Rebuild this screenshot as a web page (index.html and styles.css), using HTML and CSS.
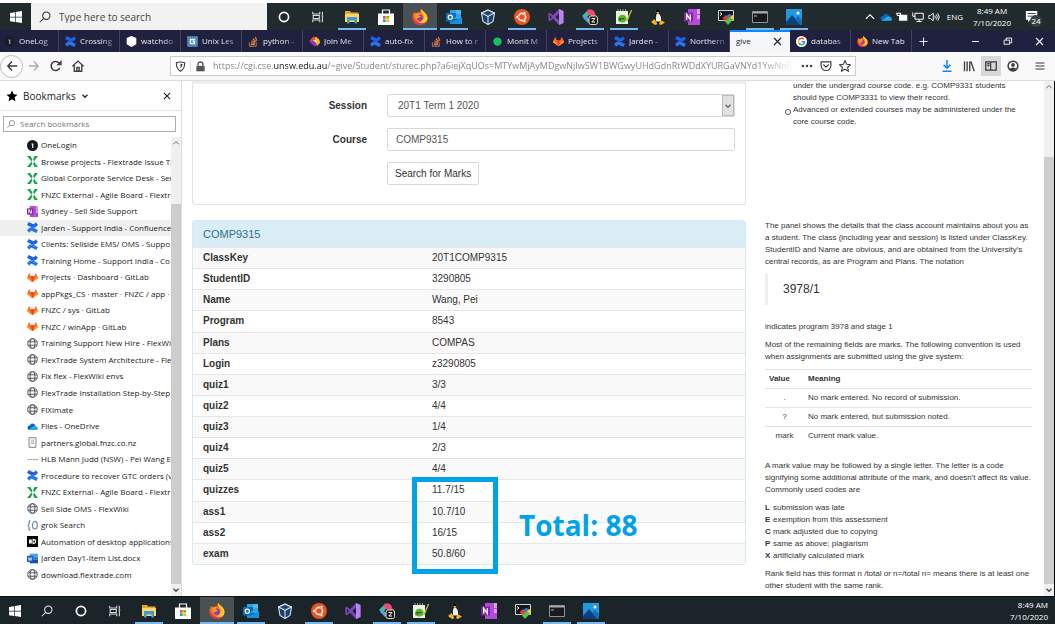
FILE: index.html
```html
<!DOCTYPE html>
<html lang="en">
<head>
<meta charset="utf-8">
<title>give</title>
<link rel="stylesheet" href="styles.css">
</head>
<body>
<svg class="sprite" aria-hidden="true">
  <symbol id="win" viewBox="0 0 16 16"><path fill="#fff" d="M2 4l5-.8v4.5H2zM7.700 3.100L14 2v5.700H7.700zM2 8.400h5v4.500L2 12.200zM7.700 8.400H14V14l-6.300-1z"/></symbol>
  <symbol id="search" viewBox="0 0 16 16"><g fill="none" stroke="currentColor" stroke-width="1.200"><circle cx="9.500" cy="6.500" r="4.200"/><path d="M6.500 9.500L2 14"/></g></symbol>
  <symbol id="cortana" viewBox="0 0 16 16"><circle cx="8" cy="8" r="4.600" fill="none" stroke="#fff" stroke-width="1.700"/></symbol>
  <symbol id="taskview" viewBox="0 0 16 16"><path fill="none" stroke="#d9dcdd" stroke-width="1.200" d="M2 2v2.500h8V2M2 14v-2.500h8V14M2.500 6.200h7v3.600h-7zM13 2v4M13 8v6M12 7h2"/></symbol>
  <symbol id="explorer" viewBox="0 0 16 16"><path fill="#e9a52b" d="M1 2h5l1 1.500h7.500V13H1z"/><path fill="#ffd767" d="M1 5h14v8H1z"/><path fill="#3f9bd8" d="M3 8h10v6.500h-2.500v-3h-5v3H3z"/></symbol>
  <symbol id="store" viewBox="0 0 16 16"><path fill="#fff" d="M0 4.500h16V16H0z"/><path fill="none" stroke="#fff" stroke-width="1.200" d="M4.500 5V1h7v4"/><path fill="#f25022" d="M5 7h2.700v2.700H5z"/><path fill="#7fba00" d="M8.300 7H11v2.700H8.300z"/><path fill="#00a4ef" d="M5 10.300h2.700V13H5z"/><path fill="#ffb900" d="M8.300 10.300H11V13H8.300z"/></symbol>
  <symbol id="firefox" viewBox="0 0 16 16"><path fill="#ff6a1f" d="M2 3l2 1.500Q6 3 8 3.300 8 1.500 9.500 0q.8 2 3 3.500Q16 6 15.500 10 14 15.800 8 15.900 1.500 15.500.5 9.500.4 6 2 3z"/><path fill="#ffc928" d="M9.500 0q-1 2 .5 4 2.500 3 1.500 6-1.500 3-4.500 3.500 5 2.500 8-2Q16.500 7 13 3.800 10.500 2 9.500 0z"/><path fill="#e62a63" d="M1 7Q0 15 8 15.900q4 0 6.500-3Q11 15 7.500 14 2.500 13 1 7z"/><circle cx="7.800" cy="8.800" r="3" fill="#7541c9"/><path fill="#ff9420" d="M3 5q2-1.500 5-.8L6.500 6.500 9 7Q8 9 6 9 4 11 3 9z"/></symbol>
  <symbol id="outlook" viewBox="0 0 16 16"><path fill="#28a8ea" d="M4 1h11v9H4z"/><path fill="#1066b5" d="M4 4h6v4H4z"/><path fill="#50b9f0" d="M10 1h5v4h-5z"/><path fill="#1490df" d="M4 8l6 3 6-3v7H4z"/><path fill="#0f6cbd" d="M0 4h8.500v8.500H0z"/><circle cx="4.300" cy="8.300" r="2.100" fill="none" stroke="#fff" stroke-width="1.200"/></symbol>
  <symbol id="vbox" viewBox="0 0 16 16"><path fill="#1d3f6e" stroke="#c6d8ec" stroke-width="1.200" d="M8 1l6.500 3L13 12.500 8 15.500 3 12.500 1.500 4z"/><path fill="#466c99" stroke="#e3edf7" d="M1.500 4L8 1l6.500 3L8 7.500z"/><path stroke="#e3edf7" d="M8 7.500v8"/><path fill="#21385b" d="M4.500 4L8 2.400 11.500 4 8 5.800z"/></symbol>
  <symbol id="ubuntu" viewBox="0 0 16 16"><circle cx="8" cy="8" r="8" fill="#e9531f"/><circle cx="8" cy="8" r="3.600" fill="none" stroke="#fff" stroke-width="1.600"/><g fill="#fff" stroke="#e9531f" stroke-width=".6"><circle cx="3.300" cy="8" r="1.500"/><circle cx="10.500" cy="3.900" r="1.500"/><circle cx="10.500" cy="12.100" r="1.500"/></g></symbol>
  <symbol id="vs" viewBox="0 0 16 16"><path fill="#7b45b5" d="M11 0l4.500 2v12L11 16 5 9.800 1.800 12.300.3 11.500v-7l1.500-.8L5 6.200zM11 4.800L7.300 8l3.700 3.200zM2 6v4l2-2z"/><path fill="#b685ee" d="M11 0l4.500 2v12L11 16z"/></symbol>
  <symbol id="slack" viewBox="0 0 16 16"><path fill="#48b9a5" d="M0 7l5-5 3 3-5 5z"/><path fill="#ef4a73" d="M5 1q4-2 7 1l2 5H9L6 5z"/><path fill="#5a9bd5" d="M1 9l3-2 5 5-3 2z"/><rect x="7" y="7" width="8.500" height="8.500" rx="2" fill="#171a1b" stroke="#e5d7b2"/><path fill="none" stroke="#fff" d="M9.500 9.500H13L9.800 13H13"/></symbol>
  <symbol id="npp" viewBox="0 0 16 16"><path fill="#e9f3e2" d="M0 2h12v13H0z"/><path stroke="#91a38c" d="M2 2V0M4.500 2V0M7 2V0M9.500 2V0"/><path fill="#5fb52b" d="M2 10q1-5 6-4 4 2 2 6-3 3-8 0z"/><path fill="#24551b" d="M3.500 9h5v1.300H5v1.200H3.500z"/><path stroke="#cdb73e" stroke-width="1.300" d="M15.500 1L11 12"/></symbol>
  <symbol id="tux" viewBox="0 0 16 16"><path fill="#0b0d0e" stroke="#555b5e" stroke-width=".4" d="M6 0h3l1 4q3 4 3 8l-4 3H6l-3-3Q4 7 5.500 4z"/><path fill="#f3f3ee" d="M6.800 4.500h2Q12 8 11 12.500H6Q5 8 6.800 4.500z"/><path fill="#f5b51d" d="M1 13l3.500-3 3 5-2.500 1zM9 15l1.500-4 4.500 2.500L11 16zM6 3h3.500L8 4.700z"/></symbol>
  <symbol id="onenote" viewBox="0 0 16 16"><path fill="#b44bd8" d="M4 0h12v16H4z"/><path fill="#d99bed" d="M13 0h3v5h-3zM13 6h3v4h-3z"/><path fill="#7f27a1" d="M0 3.500h9v9H0z"/><path fill="none" stroke="#fff" stroke-width="1.300" d="M2.700 10.800V5.300l3.600 5.400V5.200"/></symbol>
  <symbol id="mobax" viewBox="0 0 16 16"><path fill="#161a1e" stroke="#d5d5d5" d="M.5 1.500h15v10H.5z"/><path stroke="#fff" fill="none" d="M2 3.500l2 1.500-2 1.500"/><path fill="#e63c30" d="M4.500 9L8 6l3 3-3.500 3z"/><path fill="#2f7de1" d="M8.500 7l2.500-2 3 1-3 4z"/><path fill="#f7d02c" d="M12 8l4-3v5l-3 1z"/><path fill="#53c54a" d="M7 12.500l4-4 4 2-5 5.500z"/></symbol>
  <symbol id="cmd" viewBox="0 0 16 16"><path fill="#17191a" stroke="#8c9294" d="M.5 2.500h15v11H.5z"/><path fill="#a9afb1" d="M1 3h14v1.500H1z"/><path stroke="#d8dadb" stroke-width=".8" d="M2 7h3"/></symbol>
  <symbol id="photos" viewBox="0 0 16 16"><path fill="#2199df" d="M0 0h16v16H0z"/><path fill="#0c3f7e" d="M0 13l6-7 9 10H0z"/><path fill="#176bb5" d="M9 10l3-3 4 4v5h-2z"/><circle cx="12" cy="4" r="1.500" fill="#fff"/></symbol>
  <symbol id="confluence" viewBox="0 0 16 16"><path fill="#2378f0" d="M0 12Q4 6 9.500 8.500L16 11.500 13.500 16 7.500 13Q5.500 12 3.500 15.500z"/><path fill="#1f62dd" d="M16 4Q12 10 6.500 7.500L0 4.500 2.500 0l6 3Q10.500 4 12.500.5z"/></symbol>
  <symbol id="cross" viewBox="0 0 16 16"><g fill="#19a64a"><path d="M0 0h5l3 5.500L6.500 8zM16 0h-5L9 4l1 4zM0 16h5l3-5.500L6.500 8zM16 16h-5l-2-4 1-4z"/></g><path fill="#fff" d="M7.200 6.500h1.600v3H7.200z"/></symbol>
  <symbol id="gitlab" viewBox="0 0 16 16"><path fill="#fc6d26" d="M8 15L0 9l3-8 2.500 5h5L13 1l3 8z"/><path fill="#e24329" d="M8 15L5.500 6h5z"/><path fill="#fca326" d="M0 9l1-3 7 9zM16 9l-1-3-7 9z"/></symbol>
  <symbol id="globe" viewBox="0 0 16 16"><g fill="none" stroke="#505357" stroke-width="1.400"><circle cx="8" cy="8" r="7"/><ellipse cx="8" cy="8" rx="3.400" ry="7"/><path d="M1.500 5.500h13M1.500 10.500h13"/></g></symbol>
  <symbol id="onelogin" viewBox="0 0 16 16"><circle cx="8" cy="8" r="8" fill="#17191e"/><path fill="#fff" d="M6.500 5h2.700v6.500H7.500V6.700h-1z"/></symbol>
  <symbol id="onedrive" viewBox="0 0 16 16"><path fill="#0a65c0" d="M1 11Q0 7 4 6.500 6 2 10.500 4.500L14 9l-4 4H3q-1.500 0-2-2z"/><path fill="#28a8ea" d="M5 13l-3-.5L9 8q2-2 4 0 3 .5 3 3t-3 2z"/></symbol>
  <symbol id="doc" viewBox="0 0 16 16"><path fill="#fff" stroke="#777" stroke-width="1.300" d="M3 1h10v14H3z"/><path stroke="#888" d="M5.500 4.500h5M5.500 7h5M5.500 9.500h5"/></symbol>
  <symbol id="dash" viewBox="0 0 16 16"><path stroke="#9a9a9a" stroke-width="1.500" stroke-dasharray="3 1" d="M1 8h15"/></symbol>
  <symbol id="grok" viewBox="0 0 16 16"><g fill="none" stroke="#6f8cab" stroke-width="1.800"><path d="M5 1Q2.500 1 3 5q0 2.500-2 3 2 .5 2 3-.5 4 2 4"/><ellipse cx="11.500" cy="7.500" rx="3.500" ry="5.500"/></g></symbol>
  <symbol id="auto" viewBox="0 0 16 16"><path d="M0 0h16v16H0z"/><path fill="#fff" d="M3 5h4v6H3zM8 4q6 0 5.500 4T8 12z"/><path d="M9.500 6.500h2v3h-2z"/></symbol>
  <symbol id="word" viewBox="0 0 16 16"><path fill="#41a5ee" d="M4 1h12v5H4z"/><path fill="#2b7cd3" d="M4 6h12v4H4z"/><path fill="#174f9e" d="M4 10h12v5H4z"/><path fill="#185abd" d="M0 4h9v9H0z"/><path fill="none" stroke="#fff" d="M2 6l1.300 5 1.200-4 1.200 4L7 6"/></symbol>
  <symbol id="hex" viewBox="0 0 16 16"><path fill="#fff" d="M8 0l7 3v9l-7 4-7-4V3z"/></symbol>
  <symbol id="geeks" viewBox="0 0 16 16"><path fill="#3a86ca" stroke="#9dcef5" stroke-dasharray="2 1" d="M1 1h14v14H1z"/><path fill="none" stroke="#fff" stroke-width="2" d="M12 5H5v6h6V8H8"/></symbol>
  <symbol id="stack" viewBox="0 0 16 16"><path fill="none" stroke="#a9846a" stroke-width="1.300" d="M2 9v6h10V9"/><path stroke="#e8793a" stroke-width="1.700" d="M4 12.500h6M4.200 10l6 .8M5 7l5.500 2.200M7 4l4.500 4M10.500 1.500L13 7"/></symbol>
  <symbol id="swirl" viewBox="0 0 16 16"><path fill="#f2463e" d="M0 8L6 1l6 1-6 6z"/><path fill="#8d38c9" d="M0 8h7l6 6-5 1z"/><path fill="#f6b71d" d="M9 1q7 2 7 9l-4 4-3-6z"/><path fill="#fff" d="M6 7l4-2 1 5z"/></symbol>
  <symbol id="green" viewBox="0 0 16 16"><circle cx="8" cy="8" r="6" fill="#18c060"/></symbol>
  <symbol id="google" viewBox="0 0 16 16"><circle cx="8" cy="8" r="8" fill="#fff"/><g fill="none" stroke-width="2.200"><path stroke="#ea4335" d="M4.200 5.500Q7.500 1.500 11.500 4.500"/><path stroke="#fbbc05" d="M4.200 5.500q-1 2.500 0 5"/><path stroke="#34a853" d="M4.200 10.500q2.800 3.500 7 1.200"/><path stroke="#4285f4" d="M8 8.200h4.400q0 2.300-1.400 3.500"/></g></symbol>
  <symbol id="close" viewBox="0 0 16 16"><path stroke="currentColor" stroke-width="1.800" d="M3 3l10 10M13 3L3 13"/></symbol>
  <symbol id="plus" viewBox="0 0 16 16"><path stroke="currentColor" stroke-width="1.500" d="M8 2v12M2 8h12"/></symbol>
  <symbol id="down" viewBox="0 0 16 16"><path fill="none" stroke="currentColor" stroke-width="2.500" d="M3 5.500l5 5 5-5"/></symbol>
  <symbol id="up" viewBox="0 0 16 16"><path fill="none" stroke="currentColor" stroke-width="1.600" d="M2.500 10.500L8 5l5.500 5.500"/></symbol>
  <symbol id="star" viewBox="0 0 16 16"><path d="M8 .8l2.200 4.800 5.200.6-3.900 3.500 1.100 5.200L8 12.300l-4.600 2.600 1.100-5.200L.6 6.200l5.200-.6z"/></symbol>
</svg>

<header class="taskbar top">
  <button class="start" aria-label="Start"><svg class="i16"><use href="#win"/></svg></button>
  <label class="winsearch"><svg class="i14"><use href="#search"/></svg><input type="text" value="Type here to search" aria-label="Windows search"></label>
  <nav class="apps">
    <button aria-label="Cortana"><svg><use href="#cortana"/></svg></button>
    <button aria-label="Task view"><svg class="i14"><use href="#taskview"/></svg></button>
    <button class="open" aria-label="File Explorer"><svg><use href="#explorer"/></svg></button>
    <button aria-label="Store"><svg><use href="#store"/></svg></button>
    <button class="open current" aria-label="Firefox"><svg><use href="#firefox"/></svg></button>
    <button class="open" aria-label="Outlook"><svg><use href="#outlook"/></svg></button>
    <button aria-label="VirtualBox"><svg><use href="#vbox"/></svg></button>
    <button class="open" aria-label="Ubuntu"><svg><use href="#ubuntu"/></svg></button>
    <button aria-label="Visual Studio"><svg><use href="#vs"/></svg></button>
    <button class="open" aria-label="Slack"><svg><use href="#slack"/></svg></button>
    <button class="open" aria-label="Notepad++"><svg><use href="#npp"/></svg></button>
    <button aria-label="Linux"><svg><use href="#tux"/></svg></button>
    <button aria-label="OneNote"><svg><use href="#onenote"/></svg></button>
    <button aria-label="MobaXterm"><svg><use href="#mobax"/></svg></button>
    <button class="open" aria-label="Command Prompt"><svg><use href="#cmd"/></svg></button>
    <button class="open" aria-label="Photos"><svg><use href="#photos"/></svg></button>
  </nav>
  <div class="tray">
    <svg class="i12"><use href="#up"/></svg>
    <svg class="i12"><use href="#onedrive"/></svg>
    <svg class="i12" viewBox="0 0 16 16"><path fill="#fff" d="M4 5h11v8H4z"/><path stroke="#fff" fill="none" stroke-width="1.500" d="M1 3h5v3H2z"/></svg>
    <svg class="i12" viewBox="0 0 16 16"><path fill="none" stroke="#fff" stroke-width="1.300" d="M4 3h11v8H4zM9.500 11v3M6 14h7M1 2v5h3"/></svg>
    <svg class="i12" viewBox="0 0 16 16"><path fill="none" stroke="#fff" stroke-width="1.200" d="M1 6h2l4-3v10l-4-3H1zM9 6q1.500 2 0 4M11 4.500q3 3.500 0 7M13 3q4 5 0 10"/></svg>
    <span class="lang">ENG</span>
    <span class="clock">8:49 AM<br>7/10/2020</span>
    <span class="notice"><svg class="i14" viewBox="0 0 16 16"><path fill="#fff" d="M1 1h13v10H6l-2.500 3v-3H1z"/><path stroke="#222a2c" d="M3 4h9M3 7h9"/></svg><b>24</b></span>
  </div>
</header>

<nav class="tabs">
  <a class="tab" href="#"><svg class="dim"><use href="#onelogin"/></svg><span>OneLog</span></a>
  <a class="tab" href="#"><svg><use href="#confluence"/></svg><span>Crossing</span></a>
  <a class="tab" href="#"><svg><use href="#hex"/></svg><span>watchdo</span></a>
  <a class="tab" href="#"><svg><use href="#geeks"/></svg><span>Unix Les</span></a>
  <a class="tab" href="#"><svg><use href="#stack"/></svg><span>python -</span></a>
  <a class="tab" href="#"><svg><use href="#swirl"/></svg><span>Join Me</span></a>
  <a class="tab" href="#"><svg><use href="#confluence"/></svg><span>auto-fix</span></a>
  <a class="tab" href="#"><svg><use href="#stack"/></svg><span>How to r</span></a>
  <a class="tab" href="#"><svg><use href="#green"/></svg><span>Monit M</span></a>
  <a class="tab" href="#"><svg><use href="#gitlab"/></svg><span>Projects</span></a>
  <a class="tab" href="#"><svg><use href="#confluence"/></svg><span>Jarden -</span></a>
  <a class="tab" href="#"><svg><use href="#confluence"/></svg><span>Northern</span></a>
  <a class="tab active" href="#"><span>give</span><svg><use href="#close"/></svg></a>
  <a class="tab" href="#"><svg><use href="#google"/></svg><span>databas</span></a>
  <a class="tab last" href="#"><svg><use href="#firefox"/></svg><span>New Tab</span></a>
  <button class="new" aria-label="New tab"><svg><use href="#plus"/></svg></button>
  <div class="winctl">
    <button aria-label="Minimize"><svg viewBox="0 0 16 16"><path stroke="#fff" stroke-width="1.500" d="M3 8h10"/></svg></button>
    <button aria-label="Restore"><svg viewBox="0 0 16 16"><path fill="none" stroke="#fff" stroke-width="1.300" d="M3 6h8v6H3zM6 6V3h8v7h-3"/></svg></button>
    <button aria-label="Close"><svg><use href="#close"/></svg></button>
  </div>
</nav>

<div class="toolbar">
  <div class="navbtns">
    <button class="back" aria-label="Back"><svg viewBox="0 0 16 16"><path fill="none" stroke="currentColor" stroke-width="2" d="M8 2L2.500 8 8 14M2.500 8H15"/></svg></button>
    <button class="fwd" aria-label="Forward"><svg viewBox="0 0 16 16"><path fill="none" stroke="currentColor" stroke-width="1.700" d="M8 2l5.500 6L8 14M13.500 8H1"/></svg></button>
    <button aria-label="Reload"><svg viewBox="0 0 16 16"><path fill="none" stroke="currentColor" stroke-width="2" d="M13 10.500A6 6 0 1 1 12 4"/><path fill="currentColor" d="M15.500 0v7h-7z"/></svg></button>
    <button aria-label="Home"><svg viewBox="0 0 16 16"><path fill="none" stroke="currentColor" stroke-width="1.800" d="M.5 8.500L8 1.500l7.500 7M3 7v8h10V7M6.500 15v-5h3v5"/></svg></button>
  </div>
  <div class="urlbar">
    <svg viewBox="0 0 16 16"><path fill="none" stroke="#3d3d42" stroke-width="1.600" d="M2 2.500Q8 .5 14 2.500q.5 9-6 12.500-6.500-3.500-6-12.500z"/><path fill="#3d3d42" d="M8 4l3 .5q0 4-3 6.500z"/></svg>
    <i></i>
    <svg viewBox="0 0 16 16"><path fill="#55555a" d="M2 7h12v8H2z"/><path fill="none" stroke="#55555a" stroke-width="2" d="M4.500 7V4.500q0-3 3.500-3t3.500 3V7"/></svg>
    <span class="url">https://cgi.cse.<b>unsw.edu.au</b>/~give/Student/sturec.php?a6iejXqUOs=MTYwMjAyMDgwNjIwSW1BWGwyUHdGdnRtWDdXYURGaVNYd1YwNnR</span>
    <svg class="i12" viewBox="0 0 16 16"><g fill="#3d3d42"><circle cx="2.500" cy="8" r="1.700"/><circle cx="8" cy="8" r="1.700"/><circle cx="13.500" cy="8" r="1.700"/></g></svg>
    <svg class="i12" viewBox="0 0 16 16"><path fill="none" stroke="#3d3d42" stroke-width="1.600" d="M1.500 2.500h13V8q-1 6-6.500 6T1.500 8zM4.500 6L8 9.500 11.500 6"/></svg>
    <svg class="i12 outline"><use href="#star"/></svg>
  </div>
  <div class="tools">
    <button class="dl" aria-label="Downloads"><svg viewBox="0 0 16 16"><path fill="none" stroke="currentColor" stroke-width="2" d="M8 0v11M3.500 6.500L8 11l4.500-4.500M2 15h12"/></svg></button>
    <button aria-label="Library"><svg viewBox="0 0 16 16"><path stroke="currentColor" stroke-width="1.800" d="M2 2v13M5.500 2v13M9 2v13M10.500 2L15 15"/></svg></button>
    <button class="on" aria-label="Sidebars"><svg viewBox="0 0 16 16"><path fill="none" stroke="currentColor" stroke-width="1.700" d="M1 2.500h14v11H1zM7.500 2.500v11M3 5h3M3 7.500h3"/></svg></button>
    <button aria-label="Account"><svg viewBox="0 0 16 16"><circle cx="8" cy="8" r="6.500" fill="none" stroke="currentColor" stroke-width="2"/><circle cx="8" cy="6.500" r="2.500" fill="currentColor"/><path fill="currentColor" d="M3 12q5-4 10 0-5 5-10 0z"/></svg></button>
    <button class="menu" aria-label="Menu"><svg viewBox="0 0 16 16"><path stroke="currentColor" stroke-width="1.600" d="M2 4h12M2 8h12M2 12h12"/></svg></button>
  </div>
</div>

<div class="content">
  <aside class="sidebar">
    <div class="sidehead"><svg class="i12"><use href="#star"/></svg><h2>Bookmarks</h2><svg class="i8"><use href="#down"/></svg><button aria-label="Close sidebar"><svg class="i10"><use href="#close"/></svg></button></div>
    <label class="sidesearch"><svg class="i10"><use href="#search"/></svg><input type="text" placeholder="Search bookmarks" aria-label="Search bookmarks"></label>
    <div class="sidebody">
      <ul class="marks">
        <li><svg><use href="#onelogin"/></svg><a href="#">OneLogin</a></li>
        <li><svg><use href="#cross"/></svg><a href="#">Browse projects - Flextrade Issue Tr.</a></li>
        <li><svg><use href="#cross"/></svg><a href="#">Global Corporate Service Desk - Ser</a></li>
        <li><svg><use href="#cross"/></svg><a href="#">FNZC External - Agile Board - Flextr</a></li>
        <li><svg><use href="#onenote"/></svg><a href="#">Sydney - Sell Side Support</a></li>
        <li class="sel"><svg><use href="#confluence"/></svg><a href="#">Jarden - Support India - Confluence</a></li>
        <li><svg><use href="#confluence"/></svg><a href="#">Clients: Sellside EMS/ OMS - Suppo</a></li>
        <li><svg><use href="#confluence"/></svg><a href="#">Training Home - Support India - Co</a></li>
        <li><svg><use href="#gitlab"/></svg><a href="#">Projects · Dashboard · GitLab</a></li>
        <li><svg><use href="#gitlab"/></svg><a href="#">appPkgs_CS · master · FNZC / app · .</a></li>
        <li><svg><use href="#gitlab"/></svg><a href="#">FNZC / sys · GitLab</a></li>
        <li><svg><use href="#gitlab"/></svg><a href="#">FNZC / winApp · GitLab</a></li>
        <li><svg><use href="#globe"/></svg><a href="#">Training Support New Hire - FlexWi</a></li>
        <li><svg><use href="#globe"/></svg><a href="#">FlexTrade System Architecture - Flex</a></li>
        <li><svg><use href="#globe"/></svg><a href="#">Fix flex - FlexWiki envs</a></li>
        <li><svg><use href="#globe"/></svg><a href="#">FlexTrade Installation Step-by-Step</a></li>
        <li><svg><use href="#globe"/></svg><a href="#">FIXimate</a></li>
        <li><svg><use href="#onedrive"/></svg><a href="#">Files - OneDrive</a></li>
        <li><svg><use href="#doc"/></svg><a href="#">partners.global.fnzc.co.nz</a></li>
        <li><svg><use href="#dash"/></svg><a href="#">HLB Mann Judd (NSW) - Pei Wang E</a></li>
        <li><svg><use href="#confluence"/></svg><a href="#">Procedure to recover GTC orders (v1</a></li>
        <li><svg><use href="#cross"/></svg><a href="#">FNZC External - Agile Board - Flextr</a></li>
        <li><svg><use href="#globe"/></svg><a href="#">Sell Side OMS - FlexWiki</a></li>
        <li><svg><use href="#grok"/></svg><a href="#">grok Search</a></li>
        <li><svg><use href="#auto"/></svg><a href="#">Automation of desktop applications</a></li>
        <li><svg><use href="#word"/></svg><a href="#">Jarden Day1-Item List.docx</a></li>
        <li><svg><use href="#globe"/></svg><a href="#">download.flextrade.com</a></li>
      </ul>
      <div class="scroll side"><svg class="i8"><use href="#up"/></svg><div class="thumb"></div><svg class="i8"><use href="#down"/></svg></div>
    </div>
  </aside>

  <main class="page">
    <form class="panel search">
      <label for="session">Session</label>
      <div class="selectbox"><select id="session"><option>20T1 Term 1 2020</option></select><span><svg class="i8"><use href="#down"/></svg></span></div>
      <label for="course">Course</label>
      <input id="course" type="text" value="COMP9315">
      <button type="button">Search for Marks</button>
    </form>
    <section class="notes hint">
      <ul><li>under the undergrad course code. e.g. COMP9331 students<br>should type COMP3331 to view their record.</li><li class="bullet">Advanced or extended courses may be administered under the<br>core course code.</li></ul>
    </section>
    <section class="panel record">
      <h3>COMP9315</h3>
      <table>
        <tr><th scope="row">ClassKey</th><td>20T1COMP9315</td></tr>
        <tr><th scope="row">StudentID</th><td>3290805</td></tr>
        <tr><th scope="row">Name</th><td>Wang, Pei</td></tr>
        <tr><th scope="row">Program</th><td>8543</td></tr>
        <tr><th scope="row">Plans</th><td>COMPAS</td></tr>
        <tr><th scope="row">Login</th><td>z3290805</td></tr>
        <tr><th scope="row">quiz1</th><td>3/3</td></tr>
        <tr><th scope="row">quiz2</th><td>4/4</td></tr>
        <tr><th scope="row">quiz3</th><td>1/4</td></tr>
        <tr><th scope="row">quiz4</th><td>2/3</td></tr>
        <tr><th scope="row">quiz5</th><td>4/4</td></tr>
        <tr><th scope="row">quizzes</th><td>11.7/15</td></tr>
        <tr><th scope="row">ass1</th><td>10.7/10</td></tr>
        <tr><th scope="row">ass2</th><td>16/15</td></tr>
        <tr><th scope="row">exam</th><td>50.8/60</td></tr>
      </table>
      <div class="marker"></div>
      <strong class="total">Total: 88</strong>
    </section>
    <section class="notes">
      <p>The panel shows the details that the class account maintains about you as<br>a student. The class (including year and session) is listed under ClassKey.<br>StudentID and Name are obvious, and are obtained from the University's<br>central records, as are Program and Plans. The notation</p>
      <blockquote>3978/1</blockquote>
      <p>indicates program 3978 and stage 1</p>
      <p>Most of the remaining fields are marks. The following convention is used<br>when assignments are submitted using the give system:</p>
      <table>
        <tr><th>Value</th><th>Meaning</th></tr>
        <tr><td>.</td><td>No mark entered. No record of submission.</td></tr>
        <tr><td>?</td><td>No mark entered, but submission noted.</td></tr>
        <tr><td>mark</td><td>Current mark value.</td></tr>
      </table>
      <p>A mark value may be followed by a single letter. The letter is a code<br>signifying some additional attribute of the mark, and doesn't affect its value.<br>Commonly used codes are</p>
      <dl><dt>L</dt><dd>submission was late</dd><dt>E</dt><dd>exemption from this assessment</dd><dt>C</dt><dd>mark adjusted due to copying</dd><dt>P</dt><dd>same as above; plagiarism</dd><dt>X</dt><dd>artificially calculated mark</dd></dl>
      <p>Rank field has this format n /total or n=/total n= means there is at least one<br>other student with the same rank.</p>
    </section>
  </main>
  <div class="scroll main"><svg class="i8"><use href="#up"/></svg><div class="thumb"></div><svg class="i8"><use href="#down"/></svg></div>
</div>

<footer class="taskbar bottom">
  <button class="start" aria-label="Start"><svg class="i16"><use href="#win"/></svg></button>
  <nav class="apps">
    <button aria-label="Search"><svg class="i14"><use href="#search"/></svg></button>
    <button aria-label="Cortana"><svg><use href="#cortana"/></svg></button>
    <button aria-label="Task view"><svg class="i14"><use href="#taskview"/></svg></button>
    <button class="open" aria-label="File Explorer"><svg><use href="#explorer"/></svg></button>
    <button aria-label="Store"><svg><use href="#store"/></svg></button>
    <button class="open current" aria-label="Firefox"><svg><use href="#firefox"/></svg></button>
    <button class="open" aria-label="Outlook"><svg><use href="#outlook"/></svg></button>
    <button aria-label="VirtualBox"><svg><use href="#vbox"/></svg></button>
    <button class="open" aria-label="Ubuntu"><svg><use href="#ubuntu"/></svg></button>
    <button aria-label="Visual Studio"><svg><use href="#vs"/></svg></button>
    <button class="open" aria-label="Slack"><svg><use href="#slack"/></svg></button>
    <button class="open" aria-label="Notepad++"><svg><use href="#npp"/></svg></button>
    <button aria-label="Linux"><svg><use href="#tux"/></svg></button>
    <button aria-label="OneNote"><svg><use href="#onenote"/></svg></button>
    <button aria-label="MobaXterm"><svg><use href="#mobax"/></svg></button>
    <button class="open" aria-label="Command Prompt"><svg><use href="#cmd"/></svg></button>
    <button class="open" aria-label="Photos"><svg><use href="#photos"/></svg></button>
  </nav>
  <span class="clock">8:49 AM<br>7/10/2020</span>
</footer>
</body>
</html>
```
FILE: styles.css
```css
* { box-sizing: border-box; }
body {
  margin: 0;
  padding-top: 3px;
  height: 100vh;
  display: flex;
  flex-direction: column;
  overflow: hidden;
  background: #fff;
  color: #222;
  font: 8px/12px "Open Sans", sans-serif;
}
button, input, select { font: inherit; color: inherit; margin: 0; padding: 0; border: 0; background: none; min-width: 0; }
button { display: flex; align-items: center; justify-content: center; }
a { color: inherit; text-decoration: none; }
svg { width: 16px; height: 16px; flex: none; }
.sprite { position: absolute; width: 0; height: 0; }
.i14 { width: 14px; height: 14px; }
.i12 { width: 12px; height: 12px; }
.i10 { width: 10px; height: 10px; }
.i8 { width: 8px; height: 8px; }

/* Windows task bars */
.taskbar { display: flex; flex: none; background: #212a2d; color: #fff; }
.top { height: 27px; }
.bottom { height: 28px; background: #1b2529; border-top: 1px solid #0c1114; }
.start { width: 31px; }
.bottom .start { width: 30px; }
.winsearch { width: 236px; display: flex; align-items: center; gap: 7px; padding-left: 7px; background: #f2f2f2; color: #333; }
.winsearch input { flex: 1; font-size: 10px; color: #444; }
.apps { display: flex; }
.apps button { width: 34px; position: relative; color: #e3e5e6; }
.apps .current { background: #4a5153; }
.apps .open::after { content: ""; position: absolute; left: 3px; right: 3px; bottom: 0; height: 2px; background: #76b9ed; }
.apps .current::after { left: 0; right: 0; }
.tray { display: flex; align-items: center; gap: 4px; margin-left: auto; padding-right: 16px; }
.lang { margin-left: 3px; font-size: 8px; }
.clock { text-align: center; line-height: 12px; margin: 0 10px 0 6px; }
.bottom .clock { margin: 2px 7px 0 auto; text-align: right; }
.notice { position: relative; display: flex; }
.notice b { position: absolute; left: 5px; top: 5px; width: 12px; height: 12px; border-radius: 6px; background: #3a4143; font-weight: 400; line-height: 12px; text-align: center; }

/* Browser tabs */
.tabs { display: flex; flex: none; height: 22px; background: #20203f; color: #e8e8ef; }
.tab { width: 61px; display: flex; align-items: center; gap: 4px; padding-left: 6px; border-right: 1px solid #42425f; overflow: hidden; }
.tab:first-child { width: 59px; padding-left: 4px; }
.tab span { flex: 1; white-space: nowrap; mask-image: linear-gradient(90deg, #000 55%, transparent); }
.tabs svg { width: 11px; height: 11px; }
.dim { opacity: .6; }
.active { width: 60px; background: #f5f6f7; color: #222; border-top: 2px solid #0a84ff; border-right: 0; padding-bottom: 2px; }
.active span, .last span { mask-image: none; }
.tabs .active svg { margin-right: 7px; }
.new { width: 22px; }
.winctl { display: flex; margin-left: auto; }
.winctl button { width: 32px; }

/* Browser toolbar */
.toolbar { display: flex; flex: none; align-items: center; height: 29px; background: #f9f9fa; border-bottom: 1px solid #ddd; color: #3d3d42; }
.toolbar svg { width: 12px; height: 12px; }
.navbtns { display: flex; align-items: center; width: 170px; }
.navbtns button { width: 22px; height: 23px; }
.navbtns .back { width: 23px; border: 1px solid #bbb; border-radius: 50%; background: #fff; }
.navbtns .fwd { color: #aaa; }
.urlbar { display: flex; flex: 1; min-width: 0; align-items: center; gap: 7px; height: 20px; padding: 0 4px; border: 1px solid #ccc; background: #fff; color: #888; }
.toolbar .urlbar svg { width: 11px; height: 11px; }
.toolbar .urlbar .i12 { width: 12px; height: 12px; }
.urlbar i { width: 1px; height: 12px; margin: 0 -3px; background: #ddd; }
.url { flex: 1; min-width: 0; overflow: hidden; white-space: nowrap; font-size: 9px; mask-image: linear-gradient(90deg, #000 94%, transparent); }
.url b { font-weight: 400; color: #111; }
.outline { fill: none; stroke: #3d3d42; stroke-width: 1.5px; }
.tools { display: flex; align-items: center; margin-left: 81px; gap: 2px; padding-right: 5px; }
.tools button { width: 20px; height: 20px; }
.tools .dl { color: #0a84ff; }
.tools .on { background: #d8d8da; }
.tools .menu { margin-left: 5px; }

/* Sidebar */
.content { display: flex; flex: 1; min-height: 0; border-right: 1px solid #000; }
.sidebar { width: 182px; flex: none; display: flex; flex-direction: column; border-right: 1px solid #ddd; background: #fff; }
.sidehead { display: flex; align-items: center; gap: 5px; height: 30px; padding: 0 9px 0 6px; border-bottom: 1px solid #e3e3e3; }
.sidehead h2 { margin: 0; font-size: 10px; font-weight: 400; }
.sidehead button { margin-left: auto; }
.sidesearch { display: flex; align-items: center; gap: 4px; height: 16px; margin: 5px 5px 5px 3px; padding-left: 2px; border: 1px solid #aaa; color: #777; }
.sidesearch input { flex: 1; }
.sidesearch input::placeholder { color: #777; opacity: 1; }
.sidebody { display: flex; flex: 1; min-height: 0; }
.marks { flex: 1; min-width: 0; display: flex; flex-direction: column; margin: 0; padding: 0 0 13px; list-style: none; }
.marks li { flex: 1; display: flex; align-items: center; gap: 3px; padding-left: 27px; }
.marks a { flex: 1; overflow: hidden; white-space: nowrap; }
.marks svg { width: 11px; height: 11px; }
.sel { background: #f0f0f0; }
.scroll { width: 10px; flex: none; display: flex; flex-direction: column; align-items: center; gap: 2px; padding: 2px 0; background: #f0f0f0; color: #444; }
.thumb { flex: 1; width: 100%; background: #cdcdcd; }
.side .thumb { margin-top: 55px; }
.main .thumb { margin-top: 64px; }

/* Page */
.page { flex: 1; min-width: 0; display: grid; grid-template-columns: 554fr 267fr; grid-template-rows: 124px auto; gap: 15px 19px; padding: 0 12px 0 10px; overflow: hidden; font-family: "Liberation Sans", Arial, sans-serif; color: #333; }
.panel { border: 1px solid #e2e2e2; border-radius: 3px; font-size: 10px; align-self: start; }
.search { height: 100%; display: grid; grid-template-columns: 174px 1fr; grid-auto-rows: 23px; gap: 11px 20px; padding: 10px 10px 0 0; border-top: 3px solid #eee; border-top-left-radius: 0; border-top-right-radius: 0; }
.search label { font-weight: 700; text-align: right; line-height: 23px; }
.search > input, .search > button, .selectbox { border: 1px solid #d8d8d8; border-radius: 2px; background: #fff; }
.search > input { padding: 0 8px; color: #555; }
.search > button { grid-column: 2; justify-self: start; padding: 0 7px; }
.selectbox { display: flex; }
.selectbox select { flex: 1; appearance: none; padding-left: 10px; color: #555; }
.selectbox span { width: 12px; display: flex; align-items: center; justify-content: center; background: #e1e1e1; border: 1px solid #bbb; color: #666; }
.record { position: relative; border-color: #d5e9f0; }
.record h3 { margin: 0; padding-left: 10px; background: #d9edf7; color: #31708f; font-size: 11px; font-weight: 400; line-height: 26px; }
.record table { width: 100%; height: 317px; border-spacing: 0; line-height: 14px; }
.record th { width: 229px; padding: 0 10px; text-align: left; }
.record td { padding: 0 10px; }
.record th, .record td { border-top: 1px solid #e6e6e6; }
.record tr:nth-child(odd) { background: #f9f9f9; }
.marker { position: absolute; left: 219px; top: 256px; width: 86px; height: 97px; border: 5px solid #00a2e8; }
.total { position: absolute; left: 326px; top: 285px; color: #00a2e8; font: 700 28px/38px "Open Sans", sans-serif; }
.notes { font-size: 8px; line-height: 12px; white-space: nowrap; min-width: 0; }
.notes p { margin: 0 0 6px; }
.hint ul { margin: -1px 0 0; padding-left: 28px; list-style: none; }
.bullet { position: relative; }
.bullet::before { content: ""; position: absolute; left: -8px; top: 5px; width: 4px; height: 4px; border: 1px solid #555; border-radius: 50%; }
.notes blockquote { margin: 6px 0 16px; padding: 0 15px; border-left: 3px solid #eee; font-size: 12px; line-height: 31px; }
.notes table { width: 100%; margin-bottom: 15px; border-collapse: collapse; }
.notes th, .notes td { border-top: 1px solid #e2e2e2; padding: 3px 4px; text-align: left; }
.notes th:first-child { width: 39px; }
.notes td:first-child { text-align: center; }
.notes dl { display: grid; grid-template-columns: 8px 1fr; margin: 0 0 6px; }
.notes dt { font-weight: 700; }
.notes dd { margin: 0; }
```
